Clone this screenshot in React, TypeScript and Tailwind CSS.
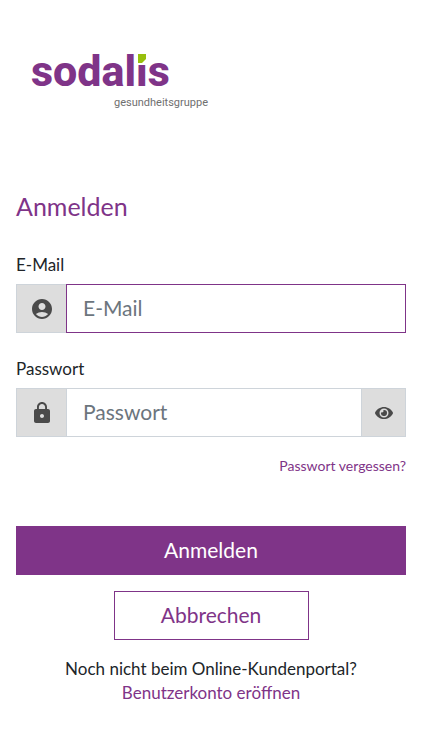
import React, { useState } from "react";
import { FaEye } from "react-icons/fa";
import { MdAccountCircle, MdLock } from "react-icons/md";

function Logo() {
  return (
    <div className="w-[182px] pl-[15px] pt-[47px]">
      <div className="font-[Roboto,sans-serif] text-[43px] leading-12 font-extrabold text-[#7f3488]">
        sodal
        <span className="relative">
          i
          <svg
            className="absolute top-[6px] left-0 h-[13px] w-3"
            viewBox="0 0 12 13"
            aria-hidden="true"
          >
            <rect width="12" height="13" fill="#fff" />
            <path d="M2 2h8v5l-4 4H2z" fill="#97bf0d" />
          </svg>
        </span>
        s
      </div>
      <div className="pl-[83px] font-[Roboto,sans-serif] text-[11px] leading-4 text-[#6f6f6f]">
        gesundheitsgruppe
      </div>
    </div>
  );
}

export default function App() {
  const [email, setEmail] = useState("");
  const [password, setPassword] = useState("");
  const [visible, setVisible] = useState(false);

  return (
    <main className="min-h-screen bg-white px-4 pb-10 font-[Lato,sans-serif] text-[17px] leading-6 text-[#212529]">
      <Logo />
      <h1 className="mt-[79px] text-[25px] leading-8 text-[#7f3488]">Anmelden</h1>

      <form onSubmit={(e) => e.preventDefault()}>
        {/* E-Mail */}
        <div className="mt-[31px]">
          <label htmlFor="email">E-Mail</label>
          <div className="mt-[7px] flex h-[49px]">
            <span className="flex w-[50px] items-center justify-center border border-r-0 border-[#ced4da] bg-[#dddddd] text-[#4a4a4a]">
              <MdAccountCircle size={24} />
            </span>
            <input
              id="email"
              type="email"
              placeholder="E-Mail"
              value={email}
              onChange={(e) => setEmail(e.target.value)}
              className="min-w-0 flex-1 border border-[#7f3488] px-4 pb-0.5 text-[21px] outline-none placeholder:text-[#6c757d]"
            />
          </div>
        </div>

        {/* Passwort */}
        <div className="mt-6">
          <label htmlFor="password">Passwort</label>
          <div className="mt-[7px] flex h-[49px]">
            <span className="flex w-[50px] items-center justify-center border border-r-0 border-[#ced4da] bg-[#dddddd] text-[#4a4a4a]">
              <MdLock size={24} />
            </span>
            <input
              id="password"
              type={visible ? "text" : "password"}
              placeholder="Passwort"
              value={password}
              onChange={(e) => setPassword(e.target.value)}
              className="min-w-0 flex-1 border border-[#ced4da] px-4 pb-0.5 text-[21px] outline-none placeholder:text-[#6c757d]"
            />
            <button
              type="button"
              aria-label="Passwort anzeigen"
              onClick={() => setVisible(!visible)}
              className="flex w-11 items-center justify-center border border-l-0 border-[#ced4da] bg-[#dddddd] text-[#4a4a4a]"
            >
              <FaEye size={18} />
            </button>
          </div>
        </div>

        <div className="mt-[17px] text-right text-[14px]">
          <a href="#passwort" className="text-[#7f3488]">
            Passwort vergessen?
          </a>
        </div>

        <button
          type="submit"
          className="mt-12 h-[49px] w-full bg-[#7f3488] pb-0.5 text-[21px] text-white"
        >
          Anmelden
        </button>
        <button
          type="button"
          className="mx-auto mt-4 block h-[49px] w-1/2 border border-[#7f3488] pb-0.5 text-[21px] text-[#7f3488]"
        >
          Abbrechen
        </button>
      </form>

      <div className="mt-[17px] text-center">
        <p>Noch nicht beim Online-Kundenportal?</p>
        <a href="#konto" className="text-[#7f3488]">
          Benutzerkonto eröffnen
        </a>
      </div>
    </main>
  );
}
